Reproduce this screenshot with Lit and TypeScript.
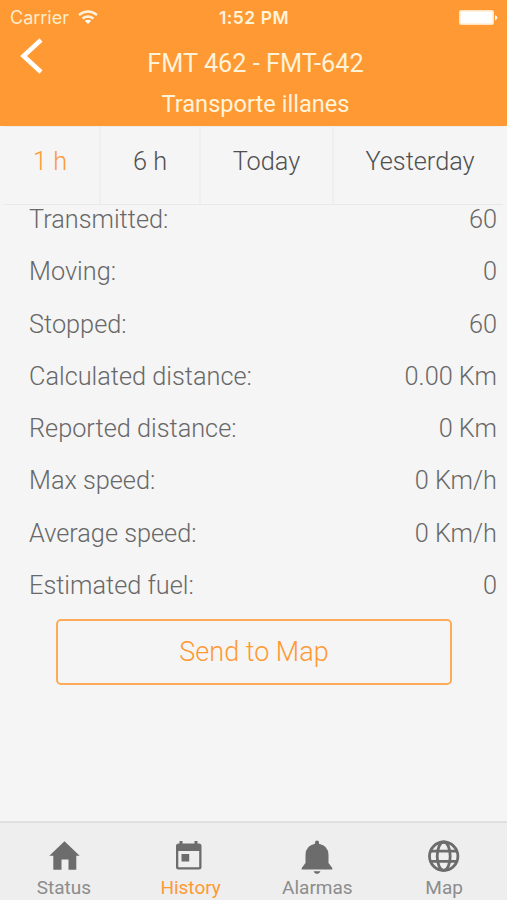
import { LitElement, html, css, svg } from "lit";
import { customElement } from "lit/decorators.js";

const tabs = ["1 h", "6 h", "Today", "Yesterday"];
const rows = [
  ["Transmitted:", "60"], ["Moving:", "0"], ["Stopped:", "60"],
  ["Calculated distance:", "0.00 Km"], ["Reported distance:", "0 Km"],
  ["Max speed:", "0 Km/h"], ["Average speed:", "0 Km/h"], ["Estimated fuel:", "0"],
];
const nav = [
  { name: "Status", icon: svg`<path d="M18.500 2.300L33.700 16.800H30.300V30.700H22.500V20.500H15.500V30.700H7.300V16.800H3.300Z"/>` },
  { name: "History", icon: svg`<path fill-rule="evenodd" d="M6.500 2h3v2.500h12V2h3v2.500h1.500q2.500 0 2.500 2.500v21q0 2.500-2.500 2.500H5.500q-2.500 0-2.500-2.500V7Q3 4.500 5.500 4.500h1zM5.300 12v16.200h20.900V12zM8.500 15h7.700v7.500H8.500z"/>` },
  { name: "Alarmas", icon: svg`<path d="M16 3.500Q16 1.500 18 1.500T20 3.500V4.700Q29.500 6.500 29.500 16V24L33.300 29V30.500H2.700V29L6.500 24V16Q6.500 6.500 16 4.700ZM14.500 32.300H21.500Q20.500 35 18 35T14.500 32.300Z"/>` },
  { name: "Map", icon: svg`<g fill="none" stroke="#6c6c6c" stroke-width="2.800"><circle cx="17.700" cy="17.200" r="14.200"/><ellipse cx="17.700" cy="17.200" rx="6.500" ry="14.200"/><path d="M4.700 12.200H30.700M4.700 22.300H30.700"/></g>` },
];

@customElement("app-root")
export class AppRoot extends LitElement {
  static styles = css`
    :host { display: flex; flex-direction: column; height: 900px; background: #f5f5f5; font-family: Roboto, "Liberation Sans", sans-serif; overflow: hidden; }
    * { box-sizing: border-box; }
    .header { height: 126px; background: #ff9933; color: #fff3d9; flex: none; }
    .statusbar { height: 34px; display: grid; grid-template-columns: 1fr auto 1fr; align-items: center; padding: 1px 9px 0 10px; font: 18px Inter, sans-serif; }
    .carrier { display: flex; align-items: center; gap: 9px; color: #ffecc8; }
    .time { font-size: 17.5px; font-weight: 600; letter-spacing: 0.5px; }
    .battery { justify-self: end; display: block; }
    .heading { display: grid; grid-template-columns: 62px 1fr 62px; height: 92px; }
    .back { display: block; margin: 3px 0 0 19px; }
    .titles { text-align: center; padding-left: 4px; }
    .title { font-size: 25.3px; line-height: 30px; padding-top: 15px; }
    .sub { font-size: 23.6px; line-height: 30px; padding-top: 10px; }
    .tabs { height: 79px; display: grid; grid-template-columns: 97px 100px 133px 1fr; margin: 0 4px; border-bottom: 1px solid #e9e9e9; border-top: 1px solid #ececec; }
    .tab { display: flex; justify-content: center; padding-top: 20px; font-size: 25.3px; font-weight: 350; line-height: 30px; color: #505050; border-right: 2px solid #efefef; }
    .tab:first-child { padding-right: 3px; }
    .tab:last-child { border: 0; padding-left: 3px; }
    .active { color: #ff9933; }
    .row { display: flex; justify-content: space-between; height: 52.25px; padding: 0 10px 0 29px; font-size: 25.3px; font-weight: 300; line-height: 30px; color: #686868; }
    .button { display: flex; align-items: center; justify-content: center; width: 396px; height: 66px; margin: -4px 0 0 56px; border: 2px solid #fcab59; border-radius: 5px; font-size: 27px; font-weight: 300; color: #ff9933; }
    .nav { margin-top: auto; height: 79px; background: #eee; border-top: 2px solid #e0e0e0; display: grid; grid-template-columns: repeat(4, 1fr); color: #8c8c8c; }
    .item { display: flex; flex-direction: column; align-items: center; padding: 16px 0 0 1px; font-size: 19px; line-height: 25px; }
    .item.active { color: #ff9933; }
    .icon { width: 36px; height: 36px; fill: #6c6c6c; flex: none; }
  `;
  render() {
    return html`
      <div class="header">
        <div class="statusbar">
          <div class="carrier"><span>Carrier</span>
            <svg width="20" height="15" viewBox="0 0 20 15" fill="none" stroke="#fff4e0" stroke-width="2.300"><path d="M1 5Q10-2 19 5M4.500 8.500Q10 4.500 15.500 8.500"/><path d="M10 14L6.800 10.800Q10 8.500 13.200 10.800Z" fill="#fff" stroke="none"/></svg>
          </div>
          <div class="time">1:52 PM</div>
          <svg class="battery" width="39" height="16"><rect width="35" height="15" rx="2" fill="#ffe4c0"/><rect x="1.500" y="1.500" width="32" height="12" rx="1" fill="#fff"/><path d="M36 5q5 2.800 0 5.500z" fill="#fff"/></svg>
        </div>
        <div class="heading">
          <svg class="back" width="26" height="38" fill="none" stroke="#fff" stroke-width="4.500"><path d="M22 3L4.500 19L22 35"/></svg>
          <div class="titles"><div class="title">FMT 462 - FMT-642</div><div class="sub">Transporte illanes</div></div>
        </div>
      </div>
      <div class="tabs">${tabs.map((t, i) => html`<div class="tab ${i ? "" : "active"}">${t}</div>`)}</div>
      <div>${rows.map(([a, b]) => html`<div class="row"><span>${a}</span><span>${b}</span></div>`)}</div>
      <div class="button">Send to Map</div>
      <div class="nav">${nav.map((n, i) => html`<div class="item ${i === 1 ? "active" : ""}"><svg class="icon" viewBox="0 0 36 36">${n.icon}</svg><span>${n.name}</span></div>`)}</div>
    `;
  }
}
